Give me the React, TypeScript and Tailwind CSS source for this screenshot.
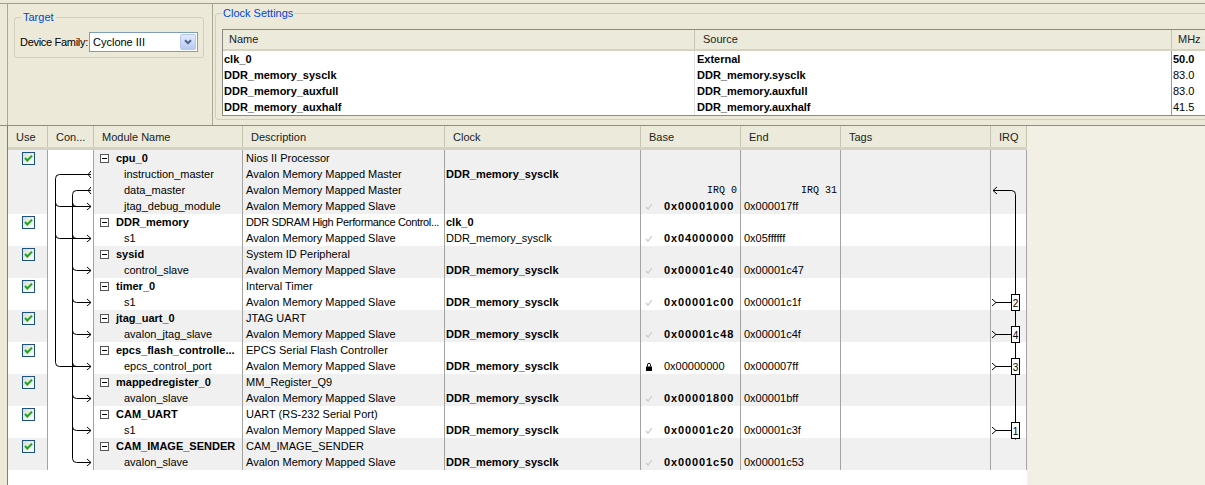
import React from 'react';

type Sub = {
    name: string;
    desc: string;
    clock?: string;
    clockPlain?: boolean;
    base?: string;
    end?: string;
    lock?: boolean;
    irqLabels?: boolean;
};
type Mod = { name: string; desc: string; clock?: string; tight?: boolean; subs: Sub[] };

const SLAVE = 'Avalon Memory Mapped Slave';
const MASTER = 'Avalon Memory Mapped Master';
const SYS = 'DDR_memory_sysclk';

const modules: Mod[] = [
    {
        name: 'cpu_0',
        desc: 'Nios II Processor',
        subs: [
            { name: 'instruction_master', desc: MASTER, clock: SYS },
            { name: 'data_master', desc: MASTER, irqLabels: true },
            { name: 'jtag_debug_module', desc: SLAVE, base: '0x00001000', end: '0x000017ff' },
        ],
    },
    {
        name: 'DDR_memory',
        desc: 'DDR SDRAM High Performance Control...',
        tight: true,
        clock: 'clk_0',
        subs: [{ name: 's1', desc: SLAVE, clock: SYS, clockPlain: true, base: '0x04000000', end: '0x05ffffff' }],
    },
    {
        name: 'sysid',
        desc: 'System ID Peripheral',
        subs: [{ name: 'control_slave', desc: SLAVE, clock: SYS, base: '0x00001c40', end: '0x00001c47' }],
    },
    {
        name: 'timer_0',
        desc: 'Interval Timer',
        subs: [{ name: 's1', desc: SLAVE, clock: SYS, base: '0x00001c00', end: '0x00001c1f' }],
    },
    {
        name: 'jtag_uart_0',
        desc: 'JTAG UART',
        subs: [{ name: 'avalon_jtag_slave', desc: SLAVE, clock: SYS, base: '0x00001c48', end: '0x00001c4f' }],
    },
    {
        name: 'epcs_flash_controlle...',
        desc: 'EPCS Serial Flash Controller',
        subs: [{ name: 'epcs_control_port', desc: SLAVE, clock: SYS, base: '0x00000000', end: '0x000007ff', lock: true }],
    },
    {
        name: 'mappedregister_0',
        desc: 'MM_Register_Q9',
        subs: [{ name: 'avalon_slave', desc: SLAVE, clock: SYS, base: '0x00001800', end: '0x00001bff' }],
    },
    {
        name: 'CAM_UART',
        desc: 'UART (RS-232 Serial Port)',
        subs: [{ name: 's1', desc: SLAVE, clock: SYS, base: '0x00001c20', end: '0x00001c3f' }],
    },
    {
        name: 'CAM_IMAGE_SENDER',
        desc: 'CAM_IMAGE_SENDER',
        subs: [{ name: 'avalon_slave', desc: SLAVE, clock: SYS, base: '0x00001c50', end: '0x00001c53' }],
    },
];

const clocks = [
    { name: 'clk_0', source: 'External', mhz: '50.0', boldMhz: true },
    { name: 'DDR_memory_sysclk', source: 'DDR_memory.sysclk', mhz: '83.0' },
    { name: 'DDR_memory_auxfull', source: 'DDR_memory.auxfull', mhz: '83.0' },
    { name: 'DDR_memory_auxhalf', source: 'DDR_memory.auxhalf', mhz: '41.5' },
];

const headers = ['Use', 'Con...', 'Module Name', 'Description', 'Clock', 'Base', 'End', 'Tags', 'IRQ'];
const W = ['w-[40px]', 'w-[46px]', 'w-[149px]', 'w-[202px]', 'w-[196px]', 'w-[100px]', 'w-[100px]', 'w-[150px]', 'w-[36px]'];

function CheckBox() {
    return (
        <svg width="13" height="13" viewBox="0 0 13 13">
            <defs>
                <linearGradient id="cbg" x1="0" y1="0" x2="1" y2="1">
                    <stop offset="0" stopColor="#dcdcd7" />
                    <stop offset="1" stopColor="#ffffff" />
                </linearGradient>
            </defs>
            <rect x="0.5" y="0.5" width="12" height="12" fill="url(#cbg)" stroke="#1c5180" />
            <path d="M3 6 L5.3 8.5 L10 3.6" fill="none" stroke="#21a121" strokeWidth="2" />
        </svg>
    );
}

function Collapse() {
    return (
        <svg width="9" height="9" viewBox="0 0 9 9" className="shrink-0">
            <rect x="0.5" y="0.5" width="8" height="8" fill="#fff" stroke="#555" />
            <path d="M2 4.5 H7" stroke="#000" />
        </svg>
    );
}

function Tick() {
    return (
        <svg width="8" height="8" viewBox="0 0 8 8" className="shrink-0">
            <path d="M1 5 L3 7 L7 2" fill="none" stroke="#c9c9c9" strokeWidth="1.2" />
        </svg>
    );
}

function Lock() {
    return (
        <svg width="8" height="9" viewBox="0 0 8 9" className="shrink-0">
            <path d="M2.5 4.5 V2.8 a1.5 1.5 0 0 1 3 0 V4.5" fill="none" stroke="#000" />
            <rect x="1" y="4.5" width="6" height="4.5" fill="#000" />
        </svg>
    );
}

function Wires() {
    const A = 55.5;
    const B = 72.5;
    const yc = (i: number) => 158.5 + 16 * i;
    const aBranches = [3, 5];
    const bBranches = [3, 5, 7, 9, 11, 13, 15, 17];
    const slaveHeads = [3, 5, 7, 9, 11, 13, 15, 17, 19];
    const irqs = [
        { row: 9, n: '2' },
        { row: 11, n: '4' },
        { row: 13, n: '3' },
        { row: 17, n: '1' },
    ];
    const C = 1015.5;
    return (
        <svg
            className="absolute left-0 top-0 pointer-events-none"
            width={1019}
            height={320}
            viewBox="8 150 1019 320"
        >
            <g fill="none" stroke="#000" strokeWidth="1">
                {/* instruction master */}
                <path d={`M91 ${yc(1)} H${A + 4} Q${A} ${yc(1)} ${A} ${yc(1) + 4} V${yc(13) - 4} Q${A} ${yc(13)} ${A + 4} ${yc(13)} H91`} />
                <path d={`M91 ${yc(1) - 3.5} L88 ${yc(1)} L91 ${yc(1) + 3.5}`} />
                {aBranches.map((r) => (
                    <path key={'a' + r} d={`M${A} ${yc(r) - 4} Q${A} ${yc(r)} ${A + 4} ${yc(r)} H91`} />
                ))}
                {/* data master */}
                <path d={`M91 ${yc(2)} H${B + 4} Q${B} ${yc(2)} ${B} ${yc(2) + 4} V${yc(19) - 4} Q${B} ${yc(19)} ${B + 4} ${yc(19)} H91`} />
                <path d={`M91 ${yc(2) - 3.5} L88 ${yc(2)} L91 ${yc(2) + 3.5}`} />
                {bBranches.map((r) => (
                    <path key={'b' + r} d={`M${B} ${yc(r) - 4} Q${B} ${yc(r)} ${B + 4} ${yc(r)} H91`} />
                ))}
                {slaveHeads.map((r) => (
                    <path key={'h' + r} d={`M87 ${yc(r) - 3.5} L91 ${yc(r)} L87 ${yc(r) + 3.5}`} />
                ))}

                {/* irq bus */}
                <path d={`M993 ${yc(2)} H${C - 4} Q${C} ${yc(2)} ${C} ${yc(2) + 4} V${yc(17) - 8}`} />
                <path d={`M997 ${yc(2) - 3.5} L993 ${yc(2)} L997 ${yc(2) + 3.5}`} />
                {irqs.map((q) => (
                    <g key={q.n}>
                        <path d={`M992 ${yc(q.row) - 3.5} L996 ${yc(q.row)} L992 ${yc(q.row) + 3.5}`} />
                        <path d={`M996 ${yc(q.row)} H1011.5`} />
                        <path d={`M${C} ${yc(q.row) - 9} V${yc(q.row) + 9}`} />
                        <rect x={1011.5} y={yc(q.row) - 8} width={8} height={16} fill="#fff" />
                    </g>
                ))}
            </g>
            {irqs.map((q) => (
                <text
                    key={'t' + q.n}
                    x={C}
                    y={yc(q.row) + 4}
                    textAnchor="middle"
                    fontSize="10"
                    fontFamily="Liberation Sans, Arial, sans-serif"
                    fill="#000"
                >
                    {q.n}
                </text>
            ))}
        </svg>
    );
}

export default function App() {
    const rows: { mod?: Mod; sub?: Sub; stripe: boolean }[] = [];
    modules.forEach((m, mi) => {
        rows.push({ mod: m, stripe: mi % 2 === 0 });
        m.subs.forEach((s) => rows.push({ sub: s, stripe: mi % 2 === 0 }));
    });

    const cell = 'shrink-0 h-full flex items-center border-r border-[#a3a3a3] whitespace-nowrap overflow-hidden';

    return (
        <div className="w-[1205px] h-[485px] overflow-hidden bg-[#ece9d8] pt-[3px] text-[11px] leading-[13px] text-black font-['Liberation_Sans',Arial,sans-serif]">
            {/* Top panes */}
            <div className="flex h-[122px] border-t border-[#9d9d98]">
                {/* Target */}
                <div className="ml-[7px] w-[206px] shrink-0 border-l border-r border-[#a8a798] pt-[7px]">
                    <fieldset className="ml-[6px] w-[190px] border border-[#d0d0bf] rounded-[3px] pb-[5px]">
                        <legend className="ml-[6px] px-[2px] text-[#0046d5]">Target</legend>
                        <div className="flex items-center mt-[8px] pl-[5px]">
                            <span className="w-[69px] shrink-0 whitespace-nowrap tracking-[-0.3px]">Device Family:</span>
                            <div className="w-[109px] h-[20px] bg-white border border-[#7f9db9] flex items-center pl-[3px] pr-[1px]">
                                <span className="flex-1">Cyclone III</span>
                                <div className="w-[16px] h-[16px] rounded-[2px] border border-[#b5c8f4] bg-gradient-to-b from-[#e3ebfd] to-[#b6c9f4] flex items-center justify-center">
                                    <svg width="8" height="6" viewBox="0 0 8 6">
                                        <path d="M1 1.2 L4 4.2 L7 1.2" fill="none" stroke="#4d6185" strokeWidth="2" />
                                    </svg>
                                </div>
                            </div>
                        </div>
                    </fieldset>
                </div>

                {/* Clock Settings */}
                <div className="flex-1 pt-[3px] pl-[2px]">
                    <fieldset className="w-[1000px] h-[113px] border border-[#d0d0bf] rounded-[3px]">
                        <legend className="ml-[6px] px-[1px] text-[#0046d5]">Clock Settings</legend>
                        <div className="ml-[6px] mt-[9px] border-l border-t border-b border-[#8a8a85] bg-white">
                            <div className="flex h-[21px] bg-[#ebeadb] border-b-[2px] border-[#d6d2c2] text-[#222]">
                                <div className="w-[472px] shrink-0 pl-[6px] flex items-center border-r border-[#c7c5b2]">Name</div>
                                <div className="w-[477px] shrink-0 pl-[8px] flex items-center border-r border-[#c7c5b2]">Source</div>
                                <div className="flex-1 pl-[6px] flex items-center">MHz</div>
                            </div>
                            {clocks.map((c) => (
                                <div key={c.name} className="flex h-[16px] font-bold">
                                    <div className="w-[472px] shrink-0 pl-[1px] flex items-center border-r border-[#e3e3e3]">{c.name}</div>
                                    <div className="w-[477px] shrink-0 pl-[2px] flex items-center border-r border-[#9a9a9a]">{c.source}</div>
                                    <div className={`flex-1 pl-[1px] flex items-center ${c.boldMhz ? 'font-bold' : 'font-normal'}`}>{c.mhz}</div>
                                </div>
                            ))}
                        </div>
                    </fieldset>
                </div>
            </div>

            {/* Module table */}
            <div className="flex h-[360px] border-t border-[#8d8d88]">
                <div className="ml-[7px] w-[1020px] shrink-0 border-l border-[#7e7e7a] bg-white flex flex-col">
                    <div className="flex h-[24px] bg-[#ebeadb] border-b-[3px] border-[#d6d2c2] text-[#222]">
                        {headers.map((h, i) => (
                            <div key={h} className={`${W[i]} shrink-0 flex items-center pl-[8px] pt-[1px] border-r border-[#c7c5b2]`}>
                                {h}
                            </div>
                        ))}
                    </div>
                    <div className="relative flex-1">
                        {rows.map((r, i) => {
                            const bg = r.stripe ? 'bg-[#f0f0f0]' : 'bg-white';
                            const m = r.mod;
                            const s = r.sub;
                            return (
                                <div key={i} className={`flex h-[16px] ${bg}`}>
                                    <div className={`${W[0]} ${cell} justify-center pl-[2px]`}>{m && <CheckBox />}</div>
                                    <div className={`${W[1]} ${cell} bg-white`} />
                                    <div className={`${W[2]} ${cell} ${m ? 'pl-[6px] gap-[7px] font-bold' : 'pl-[30px]'}`}>
                                        {m && <Collapse />}
                                        <span>{m ? m.name : s!.name}</span>
                                    </div>
                                    <div className={`${W[3]} ${cell} pl-[3px] ${m && m.tight ? 'tracking-[-0.35px]' : ''}`}>
                                        {m ? m.desc : s!.desc}
                                    </div>
                                    <div className={`${W[4]} ${cell} pl-[1px] ${s && s.clockPlain ? '' : 'font-bold'}`}>
                                        {m ? m.clock : s!.clock}
                                    </div>
                                    <div className={`${W[5]} ${cell} ${s && s.irqLabels ? 'justify-end pr-[3px]' : 'pl-[4px]'}`}>
                                        {s && s.irqLabels && (
                                            <span className="font-['Liberation_Mono',monospace] text-[10px]">IRQ 0</span>
                                        )}
                                        {s && s.base && (
                                            <>
                                                {s.lock ? <Lock /> : <Tick />}
                                                <span className={`ml-[11px] ${s.lock ? '' : 'font-bold tracking-[0.9px]'}`}>{s.base}</span>
                                            </>
                                        )}
                                    </div>
                                    <div className={`${W[6]} ${cell} ${s && s.irqLabels ? 'justify-end pr-[3px]' : 'pl-[3px]'}`}>
                                        {s && s.irqLabels && (
                                            <span className="font-['Liberation_Mono',monospace] text-[10px]">IRQ 31</span>
                                        )}
                                        {s && s.end}
                                    </div>
                                    <div className={`${W[7]} ${cell}`} />
                                    <div className={`${W[8]} ${cell}`} />
                                </div>
                            );
                        })}
                        <Wires />
                    </div>
                </div>
                <div className="flex-1 bg-[#f2efe4]" />
            </div>
        </div>
    );
}
